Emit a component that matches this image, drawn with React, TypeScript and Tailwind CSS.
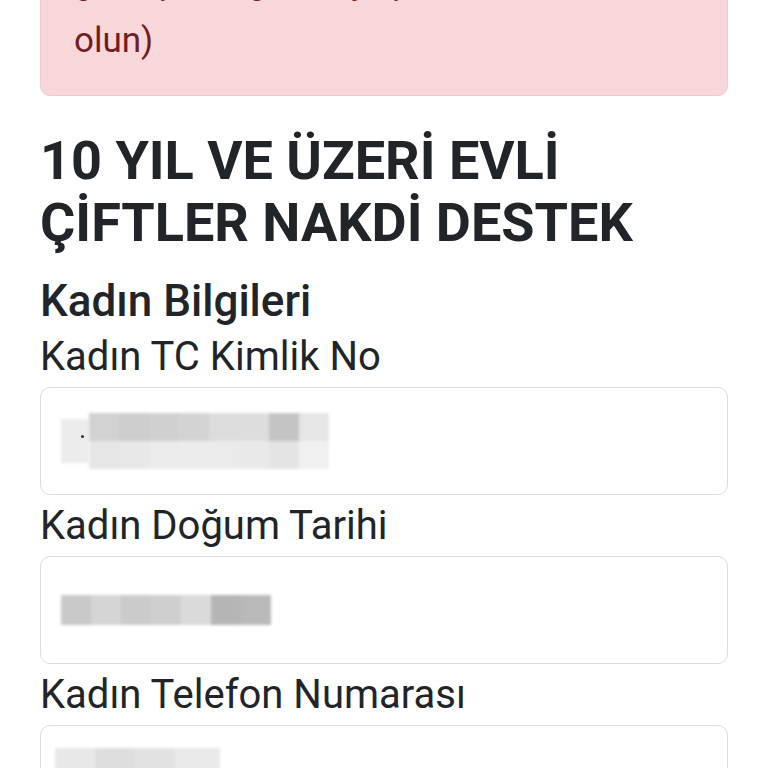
import React from 'react';

const font = { fontFamily: 'Roboto, "Noto Sans", "Liberation Sans", sans-serif' };

type Tile = { w: number; top: string; bottom?: string };

function Smudge({ tiles, rowH, className }: { tiles: Tile[]; rowH: number; className?: string }) {
  // pixelated blur over hidden personal data
  return (
    <div className={`flex blur-[1.5px] ${className ?? ''}`}>
      {tiles.map((t, i) => (
        <div key={i} className="flex flex-col">
          <div style={{ width: t.w, height: rowH, background: t.top }} />
          {t.bottom && <div style={{ width: t.w, height: rowH, background: t.bottom }} />}
        </div>
      ))}
    </div>
  );
}

function Field({ label, children }: { label: string; children?: React.ReactNode }) {
  return (
    <div className="flex flex-col">
      <label className="text-[40px] leading-[61px] text-[#212529]">{label}</label>
      <div className="h-[108px] rounded-[10px] border border-[#dcdcdc] bg-white flex items-center overflow-hidden">
        {children}
      </div>
    </div>
  );
}

export default function App() {
  return (
    <div className="min-h-screen bg-white px-[40px] pb-10" style={font}>
      {/* Error alert (scrolled partly out of view) */}
      <div className="-mt-[69px] rounded-[10px] border border-[#f5c6cb] bg-[#f8d7da] pl-[33px] pr-6 pt-[28px] pb-[27px] text-[35px] leading-[54px] text-[#721c24]">
        <div className="-mt-[4px] mb-[4px] whitespace-nowrap">girmiş olduğunuz yaş ve kimlik</div>
        <div>olun)</div>
      </div>

      <h1 className="mt-[34px] text-[54px] font-bold leading-[62px] text-[#212529]">
        10 YIL VE ÜZERİ EVLİ
        <br />
        ÇİFTLER NAKDİ DESTEK
      </h1>

      <h2 className="mt-[22px] text-[44px] font-medium leading-[50px] text-[#212529]">Kadın Bilgileri</h2>

      <div className="flex flex-col">
        <Field label="Kadın TC Kimlik No">
          <div className="relative ml-[20px] flex items-center">
            <div className="h-[44px] w-[28px] bg-[#ececec] blur-[1.5px]" />
            <Smudge
              rowH={28}
              tiles={[
                { w: 30, top: '#d2d2d2', bottom: '#e6e6e6' },
                { w: 30, top: '#cdcdcd', bottom: '#e8e8e8' },
                { w: 30, top: '#d0d0d0', bottom: '#ebebeb' },
                { w: 30, top: '#d3d3d3', bottom: '#ececec' },
                { w: 30, top: '#dcdcdc', bottom: '#ebebeb' },
                { w: 30, top: '#dddddd', bottom: '#e9e9e9' },
                { w: 30, top: '#c4c4c4', bottom: '#e4e4e4' },
                { w: 30, top: '#e6e6e6', bottom: '#f0f0f0' },
              ]}
            />
            <span className="absolute left-[20px] top-[22px] h-[3px] w-[3px] rounded-full bg-[#333]" />
          </div>
        </Field>

        <Field label="Kadın Doğum Tarihi">
          <Smudge
            className="ml-[20px]"
            rowH={30}
            tiles={[
              { w: 30, top: '#c9c9c9' },
              { w: 30, top: '#d5d5d5' },
              { w: 30, top: '#cbcbcb' },
              { w: 30, top: '#cfcfcf' },
              { w: 30, top: '#dadada' },
              { w: 30, top: '#b5b5b5' },
              { w: 30, top: '#b9b9b9' },
            ]}
          />
        </Field>

        <Field label="Kadın Telefon Numarası">
          <div className="self-start mt-[22px] ml-[14px]">
            <Smudge
              rowH={34}
              tiles={[
                { w: 40, top: '#e8e8e8' },
                { w: 40, top: '#dedede' },
                { w: 40, top: '#e2e2e2' },
                { w: 45, top: '#eaeaea' },
              ]}
            />
          </div>
        </Field>
      </div>
    </div>
  );
}
